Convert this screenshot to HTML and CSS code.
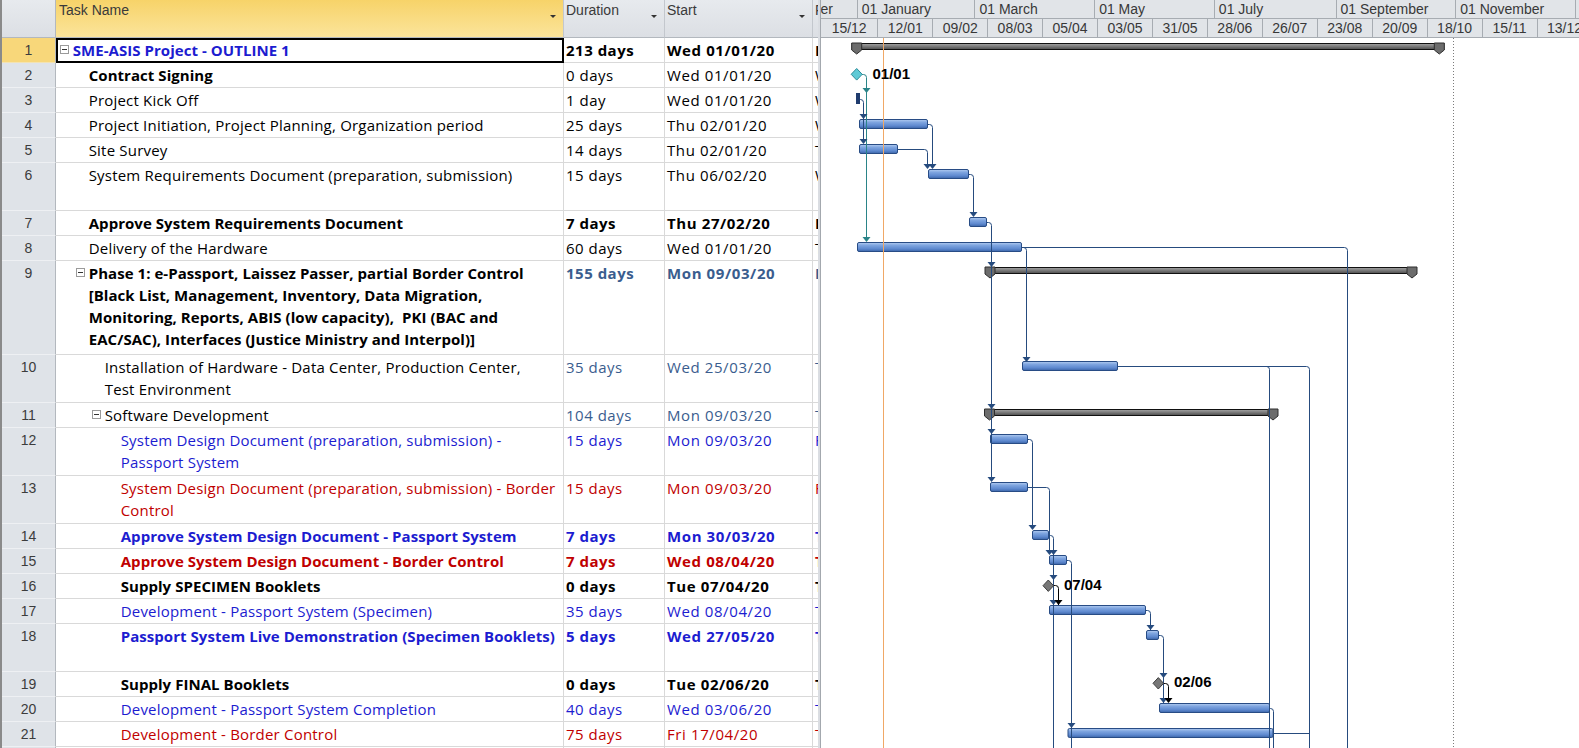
FILE: index.html
```html
<!DOCTYPE html>
<html>
<head>
<meta charset="utf-8">
<title>SME-ASIS Project - Gantt Chart</title>
<link rel="stylesheet" href="styles.css">
</head>
<body>
<div class="app">
  <div class="edge"></div>
  <div class="sheet">
    <div class="hdr">
      <div class="c num"></div>
      <div class="c task hsel">Task Name<span class="dd"></span></div>
      <div class="c dur">Duration<span class="dd"></span></div>
      <div class="c start">Start<span class="dd"></span></div>
      <div class="c fin">Finish</div>
    </div>

    <div class="row h1">
      <div class="c num nsel">1</div>
      <div class="c task csel"><span class="tog"><i class="minus"></i></span><span class="t b k-blue">SME-ASIS Project - OUTLINE 1</span></div>
      <div class="c dur b">213 days</div>
      <div class="c start b">Wed 01/01/20</div>
      <div class="c fin b">Fri 23/10/20</div>
    </div>
    <div class="row h1">
      <div class="c num">2</div>
      <div class="c task"><span class="ind l1"></span><span class="tog"></span><span class="t b">Contract Signing</span></div>
      <div class="c dur">0 days</div>
      <div class="c start">Wed 01/01/20</div>
      <div class="c fin">Wed 01/01/20</div>
    </div>
    <div class="row h1">
      <div class="c num">3</div>
      <div class="c task"><span class="ind l1"></span><span class="tog"></span><span class="t">Project Kick Off</span></div>
      <div class="c dur">1 day</div>
      <div class="c start">Wed 01/01/20</div>
      <div class="c fin">Wed 01/01/20</div>
    </div>
    <div class="row h1">
      <div class="c num">4</div>
      <div class="c task"><span class="ind l1"></span><span class="tog"></span><span class="t">Project Initiation, Project Planning, Organization period</span></div>
      <div class="c dur">25 days</div>
      <div class="c start">Thu 02/01/20</div>
      <div class="c fin">Wed 05/02/20</div>
    </div>
    <div class="row h1">
      <div class="c num">5</div>
      <div class="c task"><span class="ind l1"></span><span class="tog"></span><span class="t">Site Survey</span></div>
      <div class="c dur">14 days</div>
      <div class="c start">Thu 02/01/20</div>
      <div class="c fin">Tue 21/01/20</div>
    </div>
    <div class="row h2">
      <div class="c num">6</div>
      <div class="c task"><span class="ind l1"></span><span class="tog"></span><span class="t">System Requirements Document (preparation, submission)</span></div>
      <div class="c dur">15 days</div>
      <div class="c start">Thu 06/02/20</div>
      <div class="c fin">Wed 26/02/20</div>
    </div>
    <div class="row h1">
      <div class="c num">7</div>
      <div class="c task"><span class="ind l1"></span><span class="tog"></span><span class="t b">Approve System Requirements Document</span></div>
      <div class="c dur b">7 days</div>
      <div class="c start b">Thu 27/02/20</div>
      <div class="c fin b">Fri 06/03/20</div>
    </div>
    <div class="row h1">
      <div class="c num">8</div>
      <div class="c task"><span class="ind l1"></span><span class="tog"></span><span class="t">Delivery of the Hardware</span></div>
      <div class="c dur">60 days</div>
      <div class="c start">Wed 01/01/20</div>
      <div class="c fin">Tue 24/03/20</div>
    </div>
    <div class="row h4">
      <div class="c num">9</div>
      <div class="c task"><span class="ind l1"></span><span class="tog"><i class="minus"></i></span><span class="t b">Phase 1: e-Passport, Laissez Passer, partial Border Control<br>[Black List, Management, Inventory, Data Migration,<br>Monitoring, Reports, ABIS (low capacity),&nbsp; PKI (BAC and<br>EAC/SAC), Interfaces (Justice Ministry and Interpol)]</span></div>
      <div class="c dur b k-steel">155 days</div>
      <div class="c start b k-steel">Mon 09/03/20</div>
      <div class="c fin b k-steel">Fri 09/10/20</div>
    </div>
    <div class="row h2">
      <div class="c num">10</div>
      <div class="c task"><span class="ind l2"></span><span class="tog"></span><span class="t">Installation of Hardware - Data Center, Production Center,<br>Test Environment</span></div>
      <div class="c dur k-steel">35 days</div>
      <div class="c start k-steel">Wed 25/03/20</div>
      <div class="c fin k-steel">Tue 12/05/20</div>
    </div>
    <div class="row h1">
      <div class="c num">11</div>
      <div class="c task"><span class="ind l2"></span><span class="tog"><i class="minus"></i></span><span class="t">Software Development</span></div>
      <div class="c dur k-steel">104 days</div>
      <div class="c start k-steel">Mon 09/03/20</div>
      <div class="c fin k-steel">Thu 30/07/20</div>
    </div>
    <div class="row h2">
      <div class="c num">12</div>
      <div class="c task"><span class="ind l3"></span><span class="tog"></span><span class="t k-blue">System Design Document (preparation, submission) -<br>Passport System</span></div>
      <div class="c dur k-blue">15 days</div>
      <div class="c start k-blue">Mon 09/03/20</div>
      <div class="c fin k-blue">Fri 27/03/20</div>
    </div>
    <div class="row h2">
      <div class="c num">13</div>
      <div class="c task"><span class="ind l3"></span><span class="tog"></span><span class="t k-red">System Design Document (preparation, submission) - Border<br>Control</span></div>
      <div class="c dur k-red">15 days</div>
      <div class="c start k-red">Mon 09/03/20</div>
      <div class="c fin k-red">Fri 27/03/20</div>
    </div>
    <div class="row h1">
      <div class="c num">14</div>
      <div class="c task"><span class="ind l3"></span><span class="tog"></span><span class="t b k-blue">Approve System Design Document - Passport System</span></div>
      <div class="c dur b k-blue">7 days</div>
      <div class="c start b k-blue">Mon 30/03/20</div>
      <div class="c fin b k-blue">Tue 07/04/20</div>
    </div>
    <div class="row h1">
      <div class="c num">15</div>
      <div class="c task"><span class="ind l3"></span><span class="tog"></span><span class="t b k-red">Approve System Design Document - Border Control</span></div>
      <div class="c dur b k-red">7 days</div>
      <div class="c start b k-red">Wed 08/04/20</div>
      <div class="c fin b k-red">Thu 16/04/20</div>
    </div>
    <div class="row h1">
      <div class="c num">16</div>
      <div class="c task"><span class="ind l3"></span><span class="tog"></span><span class="t b">Supply SPECIMEN Booklets</span></div>
      <div class="c dur b">0 days</div>
      <div class="c start b">Tue 07/04/20</div>
      <div class="c fin b">Tue 07/04/20</div>
    </div>
    <div class="row h1">
      <div class="c num">17</div>
      <div class="c task"><span class="ind l3"></span><span class="tog"></span><span class="t k-blue">Development - Passport System (Specimen)</span></div>
      <div class="c dur k-blue">35 days</div>
      <div class="c start k-blue">Wed 08/04/20</div>
      <div class="c fin k-blue">Tue 26/05/20</div>
    </div>
    <div class="row h2">
      <div class="c num">18</div>
      <div class="c task"><span class="ind l3"></span><span class="tog"></span><span class="t b k-blue">Passport System Live Demonstration (Specimen Booklets)</span></div>
      <div class="c dur b k-blue">5 days</div>
      <div class="c start b k-blue">Wed 27/05/20</div>
      <div class="c fin b k-blue">Tue 02/06/20</div>
    </div>
    <div class="row h1">
      <div class="c num">19</div>
      <div class="c task"><span class="ind l3"></span><span class="tog"></span><span class="t b">Supply FINAL Booklets</span></div>
      <div class="c dur b">0 days</div>
      <div class="c start b">Tue 02/06/20</div>
      <div class="c fin b">Tue 02/06/20</div>
    </div>
    <div class="row h1">
      <div class="c num">20</div>
      <div class="c task"><span class="ind l3"></span><span class="tog"></span><span class="t k-blue">Development - Passport System Completion</span></div>
      <div class="c dur k-blue">40 days</div>
      <div class="c start k-blue">Wed 03/06/20</div>
      <div class="c fin k-blue">Tue 28/07/20</div>
    </div>
    <div class="row h1">
      <div class="c num">21</div>
      <div class="c task"><span class="ind l3"></span><span class="tog"></span><span class="t k-red">Development - Border Control</span></div>
      <div class="c dur k-red">75 days</div>
      <div class="c start k-red">Fri 17/04/20</div>
      <div class="c fin k-red">Thu 30/07/20</div>
    </div>
    <div class="row h1">
      <div class="c num"></div>
      <div class="c task"></div>
      <div class="c dur"></div>
      <div class="c start"></div>
      <div class="c fin"></div>
    </div>
  </div>

  <div class="split"></div>

  <div class="gantt">
    <div class="scale">
      <div class="tier top">
        <div class="tc first">01 November</div>
        <div class="tc m60">01 January</div>
        <div class="tc m61">01 March</div>
        <div class="tc m61">01 May</div>
        <div class="tc m62">01 July</div>
        <div class="tc m61">01 September</div>
        <div class="tc m61">01 November</div>
        <div class="tc m61">01 January</div>
      </div>
      <div class="tier bot">
        <div class="wk first">15/12</div>
        <div class="wk">12/01</div>
        <div class="wk">09/02</div>
        <div class="wk">08/03</div>
        <div class="wk">05/04</div>
        <div class="wk">03/05</div>
        <div class="wk">31/05</div>
        <div class="wk">28/06</div>
        <div class="wk">26/07</div>
        <div class="wk">23/08</div>
        <div class="wk">20/09</div>
        <div class="wk">18/10</div>
        <div class="wk">15/11</div>
        <div class="wk">13/12</div>
      </div>
    </div>
    <svg class="chart" width="758" height="710" viewBox="821 38 758 710" xmlns="http://www.w3.org/2000/svg">
      <defs>
        <linearGradient id="gb" x1="0" y1="0" x2="0" y2="1">
          <stop offset="0" stop-color="#b4cdf1"/>
          <stop offset="0.3" stop-color="#80a6e0"/>
          <stop offset="0.7" stop-color="#5e89cf"/>
          <stop offset="1" stop-color="#3c65a8"/>
        </linearGradient>
        <linearGradient id="gs" x1="0" y1="0" x2="0" y2="1">
          <stop offset="0" stop-color="#a5a5a5"/>
          <stop offset="1" stop-color="#4d4d4d"/>
        </linearGradient>
      </defs>

      <line class="dots" x1="1453.5" y1="38" x2="1453.5" y2="748"/>

      <g class="bars">
        <rect class="mini" x="856" y="93" width="4" height="11"/>
        <rect x="859.5" y="119.5" width="68" height="9" rx="1.5"/>
        <rect x="859.5" y="144.5" width="38" height="9" rx="1.5"/>
        <rect x="928.5" y="169.5" width="40" height="9" rx="1.5"/>
        <rect x="969.5" y="217.5" width="17" height="9" rx="1.5"/>
        <rect x="857.5" y="242.5" width="164" height="9" rx="1.5"/>
        <rect x="1022.5" y="361.5" width="95" height="9" rx="1.5"/>
        <rect x="990.5" y="434.5" width="37" height="9" rx="1.5"/>
        <rect x="990.5" y="482.5" width="37" height="9" rx="1.5"/>
        <rect x="1032.5" y="530.5" width="16" height="9" rx="1.5"/>
        <rect x="1049.5" y="555.5" width="17" height="9" rx="1.5"/>
        <rect x="1049.5" y="605.5" width="96" height="9" rx="1.5"/>
        <rect x="1146.5" y="630.5" width="12" height="9" rx="1.5"/>
        <rect x="1159.5" y="703.5" width="110" height="9" rx="1.5"/>
        <rect x="1068" y="728.5" width="205" height="9" rx="1.5"/>
      </g>

      <g class="sum">
        <rect x="852.2" y="43.5" width="591.6" height="6"/>
        <polygon points="851.7,43 861.7,43 861.7,50 856.7,54 851.7,50"/>
        <polygon points="1434.3,43 1444.3,43 1444.3,50 1439.3,54 1434.3,50"/>
        <rect x="985.5" y="267.5" width="431" height="6"/>
        <polygon points="985,267 995,267 995,274 990,278 985,274"/>
        <polygon points="1407,267 1417,267 1417,274 1412,278 1407,274"/>
        <rect x="985" y="409.5" width="292.5" height="6"/>
        <polygon points="984.5,409 994.5,409 994.5,416 989.5,420 984.5,416"/>
        <polygon points="1268,409 1278,409 1278,416 1273,420 1268,416"/>
      </g>

      <path class="lk teal" d="M862 74.5H863.5Q866.5 74.5 866.5 77.5V241"/>
      <g class="lk">
        <path d="M860 99.5H860.5Q863.5 99.5 863.5 102.5V143"/>
        <path d="M928 124.5H929.5Q932.5 124.5 932.5 127.5V168"/>
        <path d="M898 149.5H924.5Q927.5 149.5 927.5 152.5V168"/>
        <path d="M969 174.5H970.5Q973.5 174.5 973.5 177.5V216"/>
        <path d="M987 222.5H988.5Q991.5 222.5 991.5 225.5V481"/>
        <path d="M1022 247.5H1023.5Q1026.5 247.5 1026.5 250.5V361"/>
        <path d="M1022 247.5H1344.5Q1347.5 247.5 1347.5 250.5V748"/>
        <path d="M1118 366.5H1306.5Q1309.5 366.5 1309.5 369.5V748"/>
        <path d="M1266.5 366.5Q1269.5 366.5 1269.5 369.5V748"/>
        <path d="M1028 439.5H1029.5Q1032.5 439.5 1032.5 442.5V529"/>
        <path d="M1028 487.5H1046.5Q1049.5 487.5 1049.5 490.5V554"/>
        <path d="M1049 535.5H1050.5Q1053.5 535.5 1053.5 538.5V748"/>
        <path d="M1067 560.5H1068.5Q1071.5 560.5 1071.5 563.5V748"/>
        <path d="M1146 610.5H1147.5Q1150.5 610.5 1150.5 613.5V630"/>
        <path d="M1159 635.5H1160.5Q1163.5 635.5 1163.5 638.5V703"/>
        <path d="M1269.5 708.5H1270.5Q1273.5 708.5 1273.5 711.5V748"/>
        <path d="M1273.5 733.5H1309.5"/>
      </g>
      <g class="lk blk">
        <path d="M1053.5 585.5H1055.5Q1058.5 585.5 1058.5 588.5V605"/>
        <path d="M1163.5 683.5H1165.5Q1168.5 683.5 1168.5 686.5V702"/>
      </g>

      <g class="ah teal">
        <polygon points="862.5,88 870.5,88 866.5,93"/>
        <polygon points="862.5,237 870.5,237 866.5,242"/>
      </g>
      <g class="ah">
        <polygon points="859.5,114 867.5,114 863.5,119"/>
        <polygon points="859.5,139 867.5,139 863.5,144"/>
        <polygon points="923.5,164 931.5,164 927.5,169"/>
        <polygon points="928.5,164 936.5,164 932.5,169"/>
        <polygon points="969.5,212 977.5,212 973.5,217"/>
        <polygon points="987.5,262 995.5,262 991.5,267"/>
        <polygon points="987.5,404 995.5,404 991.5,409"/>
        <polygon points="987.5,429 995.5,429 991.5,434"/>
        <polygon points="987.5,477 995.5,477 991.5,482"/>
        <polygon points="1022.5,357 1030.5,357 1026.5,362"/>
        <polygon points="1028.5,525 1036.5,525 1032.5,530"/>
        <polygon points="1045.5,550 1053.5,550 1049.5,555"/>
        <polygon points="1049.5,550 1057.5,550 1053.5,555"/>
        <polygon points="1049.5,575 1057.5,575 1053.5,580"/>
        <polygon points="1049.5,600 1057.5,600 1053.5,605"/>
        <polygon points="1067.5,723 1075.5,723 1071.5,728"/>
        <polygon points="1146.5,625 1154.5,625 1150.5,630"/>
        <polygon points="1159.5,673 1167.5,673 1163.5,678"/>
        <polygon points="1159.5,698 1167.5,698 1163.5,703"/>
      </g>
      <g class="ah blk">
        <polygon points="1054.5,600 1062.5,600 1058.5,605"/>
        <polygon points="1164.5,698 1172.5,698 1168.5,703"/>
      </g>

      <line class="now" x1="883.5" y1="38" x2="883.5" y2="748"/>

      <polygon class="ms cyan" points="856.7,68.5 862.2,74.3 856.7,80.1 851.2,74.3"/>
      <polygon class="ms grey" points="1048.3,580 1053.6,585.7 1048.3,591.4 1043,585.7"/>
      <polygon class="ms grey" points="1158.3,677.6 1163.6,683.3 1158.3,689 1153,683.3"/>

      <text class="ml" x="872.5" y="78.5">01/01</text>
      <text class="ml" x="1064" y="589.5">07/04</text>
      <text class="ml" x="1174" y="687">02/06</text>
    </svg>
  </div>
</div>
</body>
</html>
```

FILE: styles.css
```css
* {
  box-sizing: border-box;
  margin: 0;
  padding: 0;
}

html,
body {
  width: 1579px;
  height: 748px;
  overflow: hidden;
  background: #ffffff;
}

body {
  font-family: "Open Sans", "Noto Sans", sans-serif;
}

.app {
  display: flex;
  width: 1579px;
  height: 748px;
  overflow: hidden;
}

.edge {
  flex: none;
  width: 2px;
  background: #8a8a8a;
}

/* ---------- sheet (left table) ---------- */
.sheet {
  flex: none;
  width: 816px;
  display: flex;
  flex-direction: column;
  overflow: hidden;
}

.hdr,
.row {
  display: flex;
  flex: none;
}

.hdr { height: 38px; }
.h1 { height: 25px; }
.h2 { height: 48px; }
.h4 { height: 94px; }

.c {
  flex: none;
  overflow: hidden;
  white-space: nowrap;
  border-right: 1px solid #d9d9d9;
  border-bottom: 1px solid #d9d9d9;
  font-size: 15px;
  line-height: 22px;
  letter-spacing: 0.2px;
  color: #000000;
  padding-top: 1px;
}

.num {
  width: 54px;
  background: #dfe3e8;
  border-right-color: #b3b8be;
  border-bottom-color: #eef0f3;
  text-align: center;
  font-family: "Liberation Sans", Arial, sans-serif;
  font-size: 14px;
  letter-spacing: 0;
  color: #3c3c3c;
}

.nsel {
  background: #f8d77a;
  border-bottom-color: #f3e3b3;
}

.task {
  width: 508px;
  display: flex;
  align-items: flex-start;
  padding-left: 4px;
}

.dur {
  width: 101px;
  padding-left: 2px;
  letter-spacing: 0.5px;
}

.start {
  width: 148px;
  padding-left: 2px;
  letter-spacing: 0.6px;
}

.fin {
  width: 5px;
  padding-left: 2px;
  border-right: none;
}

.csel {
  outline: 2px solid #000000;
  outline-offset: -2px;
}

.ind { flex: none; display: block; }
.l1 { width: 16px; }
.l2 { width: 32px; }
.l3 { width: 48px; }

.tog {
  flex: none;
  display: block;
  width: 12.7px;
  height: 16px;
  padding-top: 6px;
}

.minus {
  display: flex;
  align-items: center;
  justify-content: center;
  width: 9px;
  height: 9px;
  border: 1px solid #9a9a9a;
  background: #ffffff;
}

.minus::before {
  content: "";
  display: block;
  width: 5px;
  height: 1px;
  background: #333333;
}

.t { display: block; }

.b { font-weight: 700; }
.t.b { letter-spacing: 0.05px; }
.k-blue { color: #1c1cd0; }
.k-red { color: #c00000; }
.k-steel { color: #3a5d8e; }

/* header cells */
.hdr .c {
  position: relative;
  background: linear-gradient(#e7eaee, #dcdfe4);
  border-right-color: #c3c7cd;
  border-bottom: 1px solid #b3b8be;
  font-family: "Liberation Sans", Arial, sans-serif;
  font-size: 14px;
  line-height: 16px;
  letter-spacing: 0;
  color: #3a3a3a;
  padding: 2px 0 0 3px;
}

.hdr .num {
  border-right-color: #b3b8be;
}

.hdr .hsel {
  background: linear-gradient(#f7d369, #fbe49b);
}

.hdr .dur { padding-left: 2px; }
.hdr .start { padding-left: 2px; }
.hdr .fin { padding-left: 2px; }

.dd {
  position: absolute;
  right: 7px;
  top: 15px;
  width: 0;
  height: 0;
  border-left: 3px solid transparent;
  border-right: 3px solid transparent;
  border-top: 3px solid #333333;
}

/* ---------- splitter ---------- */
.split {
  flex: none;
  width: 3px;
  background: #dadde2;
  border-right: 1px solid #a3a8ae;
}

/* ---------- gantt ---------- */
.gantt {
  flex: none;
  width: 758px;
  display: flex;
  flex-direction: column;
  overflow: hidden;
}

.scale {
  flex: none;
  height: 38px;
  background: #e1e4e8;
  border-bottom: 1px solid #a7acb2;
}

.tier {
  display: flex;
  white-space: nowrap;
  font-family: "Liberation Sans", Arial, sans-serif;
  font-size: 14px;
  line-height: 18px;
  color: #383838;
}

.tier.top {
  height: 19px;
  border-bottom: 1px solid #a7acb2;
}

.tier.bot {
  height: 18px;
}

.tc {
  flex: none;
  overflow: hidden;
  border-left: 1px solid #a7acb2;
  padding-left: 4px;
}

.tc.first {
  width: 35.7px;
  border-left: none;
  padding-left: 0;
  padding-right: 23.7px;
  display: flex;
  justify-content: flex-end;
}

.m60 { width: 117.75px; }
.m61 { width: 119.71px; }
.m62 { width: 121.68px; }

.wk {
  flex: none;
  width: 54.95px;
  overflow: hidden;
  text-align: center;
  border-left: 1px solid #a7acb2;
}

.wk.first {
  width: 56.3px;
  border-left: none;
}

.chart {
  display: block;
  flex: none;
  background: #ffffff;
}

.dots {
  stroke: #7b7b7b;
  stroke-width: 1;
  stroke-dasharray: 1 2;
}

.now {
  stroke: #f0a866;
  stroke-width: 1;
}

.bars rect {
  fill: url(#gb);
  stroke: #284c85;
  stroke-width: 1;
}

.bars .mini {
  fill: #1f3c6e;
  stroke: none;
}

.sum rect {
  fill: url(#gs);
  stroke: #111111;
  stroke-width: 1;
}

.sum polygon {
  fill: #6c6c6c;
  stroke: #2e2e2e;
  stroke-width: 1;
}

.lk {
  fill: none;
  stroke: #264b7e;
  stroke-width: 1;
}

.lk path { fill: none; }

.lk.teal { stroke: #2a8488; }
.lk.blk { stroke: #000000; }

.ah polygon { fill: #264b7e; }
.ah.teal polygon { fill: #2a8488; }
.ah.blk polygon { fill: #000000; }

.ms { stroke-width: 1; }
.ms.cyan { fill: #5fcad6; stroke: #2b8c99; }
.ms.grey { fill: #777777; stroke: #3f3f3f; }

.ml {
  font-family: "Liberation Sans", Arial, sans-serif;
  font-size: 15px;
  font-weight: 700;
  fill: #000000;
}
```
